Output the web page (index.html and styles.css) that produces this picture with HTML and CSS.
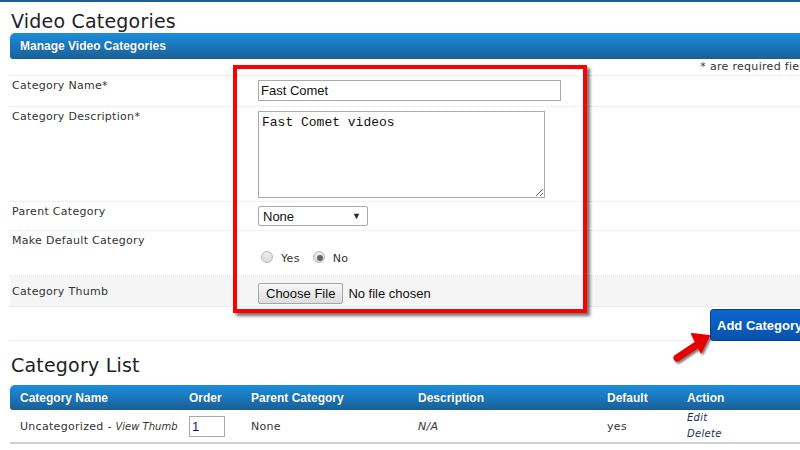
FILE: index.html
```html
<!DOCTYPE html>
<html lang="en">
<head>
<meta charset="utf-8">
<title>Video Categories</title>
<link rel="stylesheet" href="styles.css">
</head>
<body>
<div class="page">
  <h1>Video Categories</h1>
  <div class="bar">Manage Video Categories</div>
  <div class="note">* are required fields</div>

  <div class="form">
    <div class="row r-name">
      <label>Category Name*</label>
      <div><input class="text" type="text" value="Fast Comet"></div>
    </div>
    <div class="row r-desc">
      <label>Category Description*</label>
      <div><textarea>Fast Comet videos</textarea></div>
    </div>
    <div class="row r-parent">
      <label>Parent Category</label>
      <div><span class="select">None<span class="caret">&#9660;</span></span></div>
    </div>
    <div class="row r-default">
      <label>Make Default Category</label>
      <div class="radios">
        <input type="radio" name="def"> <span>Yes</span>
        <input type="radio" name="def" checked> <span>No</span>
      </div>
    </div>
    <div class="row r-thumb">
      <label>Category Thumb</label>
      <div><span class="file-btn">Choose File</span><span class="file-name">No file chosen</span></div>
    </div>
    <div class="row r-submit">
      <button class="add">Add Category</button>
    </div>
  </div>

  <h2>Category List</h2>
  <table class="list">
    <thead>
      <tr>
        <th class="c1">Category Name</th>
        <th class="c2">Order</th>
        <th class="c3">Parent Category</th>
        <th class="c4">Description</th>
        <th class="c5">Default</th>
        <th class="c6">Action</th>
      </tr>
    </thead>
    <tbody>
      <tr>
        <td>Uncategorized - <em class="small">View Thumb</em></td>
        <td><input class="order" type="text" value="1"></td>
        <td>None</td>
        <td><em>N/A</em></td>
        <td>yes</td>
        <td class="actions"><em>Edit</em><em>Delete</em></td>
      </tr>
    </tbody>
  </table>

  <div class="highlight"></div>
  <svg class="arrow" width="60" height="50" viewBox="0 0 60 50">
    <defs>
      <filter id="shadow" x="-20%" y="-20%" width="150%" height="150%">
        <feDropShadow dx="1.5" dy="2" stdDeviation="1.2" flood-color="#000" flood-opacity="0.55"/>
      </filter>
    </defs>
    <g filter="url(#shadow)" fill="#e60000" stroke="#e60000">
      <line x1="17" y1="35" x2="38" y2="21" stroke-width="7" stroke-linecap="round"/>
      <polygon points="49,13 32,11 41,29" stroke-width="2" stroke-linejoin="round"/>
    </g>
  </svg>
</div>
</body>
</html>
```
FILE: styles.css
```css
html, body { margin: 0; padding: 0; }
body {
  font-family: "DejaVu Sans", Verdana, sans-serif;
  font-size: 11px;
  letter-spacing: 0.3px;
  color: #333;
  background: #fff;
  border-top: 2px solid #1b5f94;
  overflow: hidden;
  width: 800px;
  height: 448px;
}
.page { position: relative; width: 810px; padding: 8px 0 0 10px; }

h1, h2 {
  font-weight: normal;
  font-size: 19px;
  line-height: 23px;
  letter-spacing: 0.2px;
  color: #222;
  margin: 0 0 0 1px;
}
h2 { margin: 13px 0 8px 1px; }

.bar, .list thead th {
  background: linear-gradient(#1b8edd, #1a5f96);
  color: #fff;
  font-family: "Liberation Sans", Arial, sans-serif;
  font-weight: bold;
  font-size: 12px;
  letter-spacing: 0;
  text-shadow: 0 0 1px rgba(0,0,0,.3);
}
.bar {
  height: 26px;
  line-height: 26px;
  padding-left: 10px;
  border-radius: 5px 0 0 3px;
}
.note {
  text-align: right;
  height: 16px;
  line-height: 16px;
  padding-right: 4px;
  border-bottom: 1px dotted #e2e2e2;
}

.row {
  display: grid;
  grid-template-columns: 248px 1fr;
  border-bottom: 1px dotted #e2e2e2;
}
.row label { padding: 3px 0 0 2px; }
.r-name { height: 30px; }
.r-name > div { padding-top: 4px; }
.r-desc { height: 94px; }
.r-desc > div { padding-top: 4px; }
.r-parent { height: 28px; }
.r-parent > div { padding-top: 4px; }
.r-default { height: 44px; }
.radios { padding-top: 11px; display: flex; align-items: center; }
.r-thumb { height: 30px; background: #f5f5f5; }
.r-thumb label { padding-top: 9px; }
.r-thumb > div { padding-top: 4px; display: flex; align-items: center; }
.r-submit { height: 33px; display: flex; justify-content: flex-end; border-bottom: 1px dotted #e2e2e2; }

.text, textarea, .select, .file-btn, .file-name, .order {
  font-family: "Liberation Sans", Arial, sans-serif;
  font-size: 13px;
  letter-spacing: 0;
  color: #111;
}
.text {
  width: 297px;
  height: 17px;
  border: 1px solid #a9a9a9;
  padding: 1px 2px;
  margin: 0;
  display: block;
}
textarea {
  display: block;
  width: 279px;
  height: 80px;
  margin: 0;
  padding: 3px 3px 2px;
  border: 1px solid #a9a9a9;
  font-family: "Liberation Mono", "Courier New", monospace;
  resize: both;
}
.select {
  display: inline-flex;
  justify-content: space-between;
  align-items: center;
  box-sizing: border-box;
  width: 110px;
  height: 20px;
  padding: 0 6px 0 4px;
  border: 1px solid #a9a9a9;
  border-radius: 2px;
  background: #fff;
}
.caret { font-size: 9px; color: #222; }

.radios input {
  appearance: none;
  width: 12px;
  height: 12px;
  margin: 0 0 0 3px;
  border: 1px solid #b8b8b8;
  border-radius: 50%;
  background: linear-gradient(#ececec, #dcdcdc);
  position: relative;
  top: -2px;
}
.radios input:checked::after {
  content: "";
  position: absolute;
  left: 3px; top: 3px;
  width: 6px; height: 6px;
  border-radius: 50%;
  background: #666;
}
.radios span { margin: 0 10px 0 8px; font-size: 11px; color: #333; }

.file-btn {
  display: inline-block;
  box-sizing: border-box;
  height: 21px;
  line-height: 19px;
  padding: 0 7px;
  border: 1px solid #a6a6a6;
  border-radius: 2px;
  background: linear-gradient(#f6f6f6, #dedede);
}
.file-name { margin-left: 5px; }

.add {
  width: 110px;
  height: 32px;
  margin-top: 2px;
  border: 1px solid #0b3f86;
  border-radius: 3px;
  background: linear-gradient(#0a66cf, #0a52ab);
  color: #fff;
  font-family: "Liberation Sans", Arial, sans-serif;
  font-weight: bold;
  font-size: 13px;
  text-align: left;
  padding-left: 6px;
  position: relative;
  z-index: 1;
}

.list { border-collapse: collapse; width: 810px; table-layout: fixed; }
.list thead th {
  height: 25px;
  padding: 0 0 0 10px;
  text-align: left;
}
.list thead th.c1 { width: 159px; border-radius: 5px 0 0 3px; }
.list thead th.c2 { width: 52px; }
.list thead th.c3 { width: 157px; }
.list thead th.c4 { width: 179px; }
.list thead th.c5 { width: 70px; }
.list td {
  height: 32px;
  padding: 0 0 0 10px;
  border-bottom: 2px solid #d0d0d0;
  vertical-align: middle;
}
.list em { color: #333; }
.small { font-size: 10px; color: #222; letter-spacing: 0; }
.order {
  width: 30px;
  height: 17px;
  padding: 1px 2px;
  margin: 0;
  border: 1px solid #a9a9a9;
  color: #2a0a6e;
}
.actions { padding-top: 3px; }
.actions em { display: block; font-size: 10px; line-height: 16px; color: #1f2f50; }

.highlight {
  position: absolute;
  left: 233px;
  top: 63px;
  width: 346px;
  height: 240px;
  border: 4px solid #f00;
  box-shadow: 3px 3px 3px rgba(0,0,0,.55);
  pointer-events: none;
}
.arrow { position: absolute; left: 660px; top: 321px; }
```
